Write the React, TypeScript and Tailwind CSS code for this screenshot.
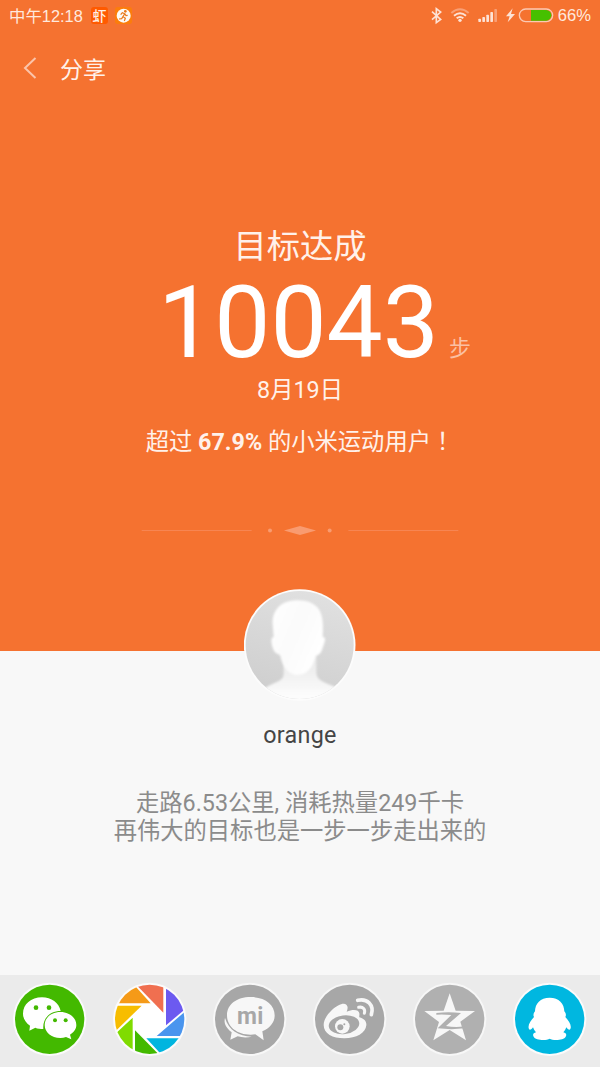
import React from 'react'

function StatusBar() {
  return (
    <div className="flex h-8 items-center justify-between pl-[9px] pr-[9px] text-left font-['Liberation_Sans','Noto_Sans_CJK_SC',sans-serif] text-[16.6px] text-[#ffe9de]">
      <div className="flex items-center">
        <span className="w-[82px] whitespace-nowrap text-[16.4px]">中午12:18</span>
        <span className="flex h-[17px] w-[17px] items-center justify-center overflow-hidden rounded-[3px] bg-[#ff5a00] text-[14px] font-medium leading-none text-[#fff0e6]">
          虾
        </span>
        <svg className="ml-[7px] h-[17px] w-[17px]" viewBox="0 0 51 51">
          <rect width="51" height="51" rx="8" fill="#fb7d0c" />
          <circle cx="26" cy="26" r="21" fill="#fdfaf6" />
          <circle cx="31" cy="13" r="4" fill="#e8791c" />
          <path
            d="M17 23 22 17 29 20 24 29 31 34 28 42M24 29 20 35 12 36M29 20 33 26 38 25"
            fill="none"
            stroke="#e8791c"
            strokeWidth="3.6"
          />
        </svg>
      </div>

      <div className="flex items-center">
        <svg className="h-8 w-[134px]" viewBox="0 0 402 96">
          {/* Bluetooth */}
          <path d="M24 35 50 58 37 68V26L50 36 24 59" fill="none" stroke="#fde2d5" strokeWidth="5" />
          {/* Wi-Fi */}
          <g fill="none" strokeWidth="6">
            <path d="M82 39Q108 17 134 39" stroke="#f99f75" />
            <path d="M90 47Q108 32 126 47" stroke="#fde2d5" />
            <path d="M98 55Q108 47 118 55" stroke="#fde2d5" />
          </g>
          <circle cx="108" cy="61" r="5" fill="#fde2d5" />
          {/* Signal */}
          <g fill="#fde2d5">
            <rect x="163" y="56" width="8" height="10" rx="2" />
            <rect x="175" y="51" width="8" height="15" rx="2" />
            <rect x="187" y="44" width="8" height="22" rx="2" />
            <rect x="199" y="36" width="8" height="30" rx="2" />
            <rect x="211" y="27" width="8" height="39" rx="2" fill="#f99f75" />
          </g>
          {/* Charging battery */}
          <path d="M266 25 246 49H257L251 67 273 42H261Z" fill="#fde2d5" />
          <rect x="286" y="27" width="100" height="38" rx="19" fill="none" stroke="#fbc9b3" strokeWidth="4" />
          <path d="M321 30H366A16 16 0 0 1 366 62H321Z" fill="#46c000" />
        </svg>
        <span>66%</span>
      </div>
    </div>
  )
}

function Divider() {
  return (
    <svg className="mx-auto h-[10px] w-[320px]" viewBox="-5 -1 960 30">
      <g fill="#f99b70">
        <path d="M0 14H330V17H0ZM620 14H950V17H620Z" fill="#f78552" />
        <circle cx="385" cy="15.5" r="6" />
        <path d="M427 15.5 475 2 523 15.5 475 29Z" />
        <circle cx="564" cy="15.5" r="6" />
      </g>
    </svg>
  )
}

function Avatar() {
  return (
    <svg className="h-[112px] w-[112px]" viewBox="0 0 336 336">
      <defs>
        <clipPath id="face">
          <circle cx="167" cy="168" r="162" />
        </clipPath>
        <linearGradient id="backdrop" x1="0.2" y1="1" x2="0.5" y2="0">
          <stop offset="0" stopColor="#cdcdcd" />
          <stop offset="1" stopColor="#e0e0e0" />
        </linearGradient>
        <linearGradient id="skin" x1="0" y1="0" x2="1" y2="0.6">
          <stop offset="0" stopColor="#ffffff" />
          <stop offset="0.5" stopColor="#fbfbfb" />
          <stop offset="1" stopColor="#ffffff" />
        </linearGradient>
        <linearGradient id="neck" x1="0" y1="0" x2="0" y2="1">
          <stop offset="0" stopColor="#e9e9e9" />
          <stop offset="0.4" stopColor="#f1f1f1" />
          <stop offset="0.85" stopColor="#fcfcfc" />
        </linearGradient>
        <filter id="soft">
          <feGaussianBlur stdDeviation="3" />
        </filter>
      </defs>
      <circle cx="167" cy="168" r="167.5" fill="#fcfcfc" />
      <g clipPath="url(#face)">
        <rect width="336" height="336" fill="url(#backdrop)" />
        <path
          d="M119 200V256C119 276 92 280 62 297L40 340H300L274 294C238 280 217 274 217 250V200Z"
          fill="url(#neck)"
          filter="url(#soft)"
        />
        <path
          d="M160 34C112 34 84 62 86 106L89 144C79 144 81 164 89 184C94 196 106 194 109 201C116 234 134 258 161 258C188 258 205 238 215 202C222 198 231 194 235 180C242 160 249 144 236 144C240 90 238 34 160 34Z"
          fill="url(#skin)"
          filter="url(#soft)"
        />
      </g>
    </svg>
  )
}

function ShareButton({
  label,
  ring,
  fill,
  children,
}: {
  label: string
  ring: string
  fill: string
  children: React.ReactNode
}) {
  return (
    <button aria-label={label} className="h-[92px]">
      <svg className="h-[92px] w-[100px]" viewBox="0 15 300 276">
        <circle cx="149" cy="148" r="110" fill={ring} />
        <circle cx="149" cy="148" r="104" fill={fill} />
        {children}
      </svg>
    </button>
  )
}

function ShareBar() {
  return (
    <div className="grid h-[92px] grid-cols-6 bg-[#ebebeb]">
      <ShareButton label="WeChat" ring="#fbfbfb" fill="#43b900">
        <path
          d="M126 82C93 82 69 103 69 131C69 146 77 158 90 167L88 182L106 173C113 176 121 177 130 177C127 145 150 123 182 123C177 98 154 82 126 82Z"
          fill="#fff"
        />
        <path
          d="M181 126C154 126 134 143 134 165C134 187 154 204 181 204C187 204 193 203 198 201L214 208L210 194C221 188 229 177 229 165C229 143 208 126 181 126Z"
          fill="#fff"
        />
        <g fill="#43b900">
          <circle cx="108" cy="113" r="7" />
          <circle cx="147" cy="113" r="7" />
          <circle cx="165" cy="151" r="6" />
          <circle cx="197" cy="151" r="6" />
        </g>
      </ShareButton>

      <ShareButton label="Moments" ring="#fbfbfb" fill="#fff">
        <clipPath id="shutter">
          <circle cx="149" cy="148" r="104" />
        </clipPath>
        <g clipPath="url(#shutter)">
          <path d="M113 49 130 30H190V128Z" fill="#f06f50" />
          <path d="M198 30H270V105L198 166Z" fill="#6c5af0" />
          <path d="M250 129 270 110V198H170Z" fill="#4a95ee" />
          <path d="M139 205H270V260H190Z" fill="#00b5df" />
          <path d="M105 181 178 255 160 270H105Z" fill="#43b900" />
          <path d="M98 143V250H80L30 200 52 186Z" fill="#80db00" />
          <path d="M30 107H125L47 183 30 190Z" fill="#f7bd00" />
          <path d="M152 100H40V70L108 51Z" fill="#f59a18" />
        </g>
      </ShareButton>

      <ShareButton label="MiTalk" ring="#f7f7f7" fill="#a7a7a7">
        <path
          d="M75 144C71 159 76 171 95 187L91 209L113 199C126 203 143 203 155 200C116 198 86 181 75 144Z"
          fill="#f7f7f7"
        />
        <path
          d="M152 81C110 81 81 103 81 136C81 170 111 194 152 194L166 193L191 211L187 184C211 173 224 157 224 136C224 103 194 81 152 81Z"
          fill="#f7f7f7"
        />
        <text
          x="111 172"
          y="161"
          className="font-['Roboto',sans-serif] text-[69px] font-bold"
          fill="#a7a7a7"
        >
          mi
        </text>
      </ShareButton>

      <ShareButton label="Weibo" ring="#f7f7f7" fill="#a7a7a7">
        <path
          d="M139 104C145 109 143 118 140 125C158 117 177 118 178 130C179 136 177 139 178 142C193 146 200 155 199 166C197 189 169 205 133 205C98 205 71 191 71 165C71 150 80 136 95 121C112 105 131 97 139 104Z"
          fill="#f7f7f7"
        />
        <ellipse cx="132" cy="164" rx="46" ry="28" fill="#a7a7a7" transform="rotate(-7 132 164)" />
        <circle cx="127" cy="169" r="22" fill="#f7f7f7" />
        <circle cx="121" cy="172" r="9" fill="#a7a7a7" />
        <circle cx="133" cy="163" r="3" fill="#a7a7a7" />
        <g fill="none" stroke="#f7f7f7" strokeWidth="11" strokeLinecap="round">
          <path d="M173 91C202 84 223 105 214 134" />
          <path d="M176 112C189 109 197 118 193 130" strokeWidth="9" />
        </g>
      </ShareButton>

      <ShareButton label="Qzone" ring="#f7f7f7" fill="#b0b0b0">
        <path
          d="M149 70 167 122 225 123 181 155 198 211 149 180 100 211 117 156 73 123 131 122Z"
          fill="#f7f7f7"
        />
        <path
          d="M109 129Q145 124 183 129L138 168Q165 173 194 169V175Q155 180 113 175L154 135Q132 133 109 134Z"
          fill="#b0b0b0"
        />
      </ShareButton>

      <ShareButton label="QQ" ring="#fbfbfb" fill="#00b7e0">
        <path
          d="M149 83C121 83 105 101 105 124C100 130 99 136 102 141C91 152 82 168 87 177C89 182 95 178 99 172C101 178 104 183 108 187C100 189 97 194 101 200C106 211 139 212 149 206C159 212 192 211 197 200C201 194 198 189 190 187C194 183 197 178 199 172C203 178 209 182 211 177C216 168 207 152 196 141C199 136 198 130 193 124C193 101 177 83 149 83Z"
          fill="#fff"
        />
      </ShareButton>
    </div>
  )
}

export default function App() {
  return (
    <div className="flex h-[1067px] w-[600px] flex-col overflow-hidden bg-[#f8f8f8] font-['Roboto','Noto_Sans_CJK_SC',sans-serif]">
      <section className="h-[651px] bg-[#f57230] text-center text-[#fff1ea]">
        <StatusBar />

        <header className="flex h-[72px] items-center pl-[23px]">
          <svg className="h-6 w-[14px]" viewBox="0 0 14 24">
            <path d="M12.5 2 2 12 12.5 22" fill="none" stroke="#fbc4aa" strokeWidth="2" />
          </svg>
          <h1 className="ml-[23px] mt-1.5 text-[23px] leading-8">分享</h1>
        </header>

        <h2 className="mt-[123px] text-[33.3px] leading-10">目标达成</h2>
        <div className="mt-1.5 flex items-baseline justify-center text-white">
          <span className="ml-[29px] text-[100px] leading-[100px]">10043</span>
          <span className="relative -top-px ml-[10px] text-[22px] leading-none text-[#fbc0a3]">步</span>
        </div>
        <p className="mt-[3px] text-[23.3px] leading-7">8月19日</p>
        <p className="mt-6 text-[23.3px] leading-7">
          超过 <b>67.9%</b> 的小米运动用户
          <span className="font-['Noto_Sans_CJK_TC',sans-serif] leading-none">！</span>
        </p>
        <div className="mt-[69px]">
          <Divider />
        </div>
      </section>

      <section className="relative -mt-[62px] flex grow flex-col items-center">
        <Avatar />
        <div className="mt-5 text-[23.3px] leading-7 tracking-[0.3px] text-[#454545]">orange</div>
        <p className="mt-[41px] text-center text-[23.3px] leading-[27.5px] text-[#8b8b8b]">
          走路6.53公里, 消耗热量249千卡
          <br />
          再伟大的目标也是一步一步走出来的
        </p>
      </section>

      <ShareBar />
    </div>
  )
}
